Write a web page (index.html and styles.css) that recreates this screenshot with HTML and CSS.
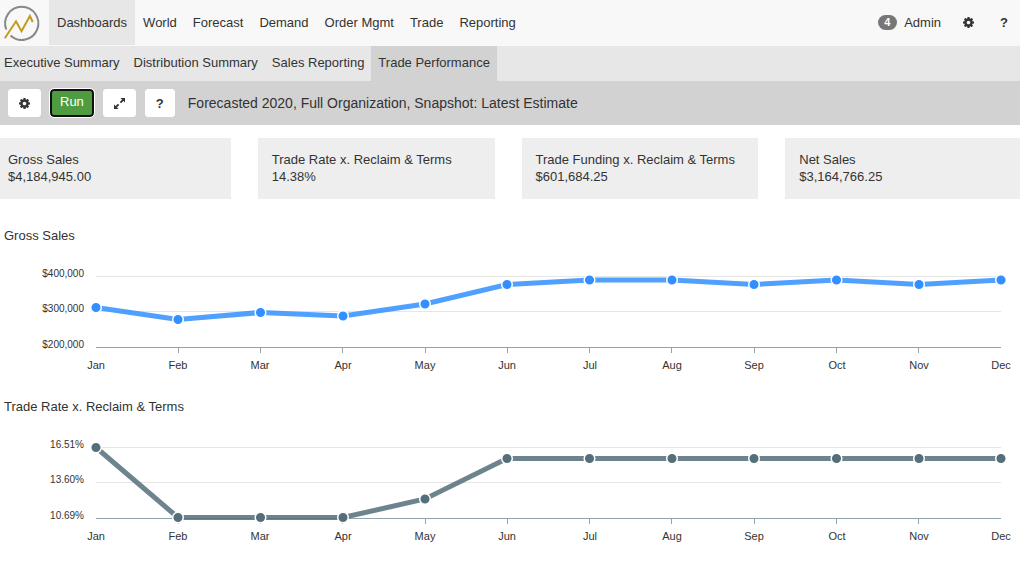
FILE: index.html
```html
<!DOCTYPE html>
<html lang="en">
<head>
<meta charset="utf-8">
<meta name="viewport" content="width=device-width, initial-scale=1">
<title>Trade Performance</title>
<link rel="stylesheet" href="styles.css">
</head>
<body>
<svg class="defs" aria-hidden="true">
  <symbol id="gear" viewBox="0 0 1536 1536"><path d="M1024 768q0-106-75-181t-181-75-181 75-75 181 75 181 181 75 181-75 75-181zm512-109v222q0 12-8 23t-20 13l-185 28q-19 54-39 91 35 50 107 138 10 12 10 25t-9 23q-27 37-99 108t-94 71q-12 0-26-9l-138-108q-44 23-91 38-16 136-29 186-7 28-36 28H657q-14 0-24.500-8.500T621 1506l-28-184q-49-16-90-37l-141 107q-10 9-25 9-14 0-25-11-126-114-165-168-7-10-7-23 0-12 8-23 15-21 51-66.500t54-70.500q-27-50-41-99L29 913q-13-2-21-12.500T0 877V655q0-12 8-23t19-13l186-28q14-46 39-92-40-57-107-138-10-12-10-24 0-10 9-23 26-36 98.500-107.500T337 135q13 0 26 10l138 107q44-23 91-38 16-136 29-186 7-28 36-28h222q14 0 24.500 8.500T915 30l28 184q49 16 90 37l142-107q9-9 24-9 13 0 25 10 129 119 165 170 7 8 7 22 0 12-8 23-15 21-51 66.500t-54 70.500q26 50 41 98l183 28q13 2 21 12.500t8 23.500z"/></symbol>
</svg>

<header class="topbar">
  <a class="logo" href="#" aria-label="Home">
    <svg viewBox="0 0 42 46" width="42" height="46">
      <path class="logo-ring" d="M6.300 29.500A16.600 16.600 0 1 1 10.500 35.600"/>
      <path class="logo-line" d="M4.800 38.200 16 21.300 21.500 31.200 29.900 16 32.700 22"/>
    </svg>
  </a>
  <nav class="menu" aria-label="Main">
    <a class="active" href="#">Dashboards</a>
    <a href="#">World</a>
    <a href="#">Forecast</a>
    <a href="#">Demand</a>
    <a href="#">Order Mgmt</a>
    <a href="#">Trade</a>
    <a href="#">Reporting</a>
  </nav>
  <div class="account">
    <a class="user" href="#"><span class="badge">4</span>Admin</a>
    <a href="#" aria-label="Settings"><svg class="icon"><use href="#gear"/></svg></a>
    <a class="help" href="#">?</a>
  </div>
</header>

<nav class="subnav" aria-label="Dashboards">
  <a href="#">Executive Summary</a>
  <a href="#">Distribution Summary</a>
  <a href="#">Sales Reporting</a>
  <a class="active" href="#">Trade Performance</a>
</nav>

<div class="toolbar">
  <button class="btn" type="button" aria-label="Options"><svg class="icon"><use href="#gear"/></svg></button>
  <button class="btn run" type="button">Run</button>
  <button class="btn" type="button" aria-label="Expand">
    <svg class="icon expand" viewBox="0 0 12 12"><path class="solid" d="M7 0h5v5zM0 7v5h5z"/><path class="shaft" d="M10 2 7 5M5 7 2 10"/></svg>
  </button>
  <button class="btn question" type="button">?</button>
  <h1 class="report">Forecasted 2020, Full Organization, Snapshot: Latest Estimate</h1>
</div>

<main>
  <section class="cards">
    <div class="card"><div>Gross Sales</div><div>$4,184,945.00</div></div>
    <div class="card"><div>Trade Rate x. Reclaim &amp; Terms</div><div>14.38%</div></div>
    <div class="card"><div>Trade Funding x. Reclaim &amp; Terms</div><div>$601,684.25</div></div>
    <div class="card"><div>Net Sales</div><div>$3,164,766.25</div></div>
  </section>

  <section class="panel">
    <h2>Gross Sales</h2>
    <svg class="chart sales" viewBox="0 0 1020 120" role="img" aria-label="Gross sales by month">
      <defs><marker id="dot-sales" markerUnits="userSpaceOnUse" markerWidth="14" markerHeight="14" refX="7" refY="7"><circle cx="7" cy="7" r="5.300"/></marker></defs>
      <path class="grid" d="M96 18.500H1001M96 53.500H1001"/>
      <path class="axis" d="M96 89.500H1001M178.500 89V95M260.500 89V95M342.500 89V95M425.500 89V95M507.500 89V95M589.500 89V95M671.500 89V95M754.500 89V95M836.500 89V95M918.500 89V95"/>
      <polyline class="line" points="96,49.500 178,61.500 260.500,54.500 343,58 425,46 507,26.500 589.500,22 672,22 754,26.500 836.500,22 919,26.500 1001,22"/>
      <polyline class="dots" points="96,49.500 178,61.500 260.500,54.500 343,58 425,46 507,26.500 589.500,22 672,22 754,26.500 836.500,22 919,26.500 1001,22"/>
      <g class="values"><text x="84" y="19">$400,000</text><text x="84" y="54">$300,000</text><text x="84" y="90">$200,000</text></g>
      <g class="months"><text x="96" y="111">Jan</text><text x="178" y="111">Feb</text><text x="260" y="111">Mar</text><text x="343" y="111">Apr</text><text x="425" y="111">May</text><text x="507" y="111">Jun</text><text x="590" y="111">Jul</text><text x="672" y="111">Aug</text><text x="754" y="111">Sep</text><text x="837" y="111">Oct</text><text x="919" y="111">Nov</text><text x="1001" y="111">Dec</text></g>
    </svg>
  </section>

  <section class="panel">
    <h2>Trade Rate x. Reclaim &amp; Terms</h2>
    <svg class="chart rate" viewBox="0 0 1020 120" role="img" aria-label="Trade rate by month">
      <defs><marker id="dot-rate" markerUnits="userSpaceOnUse" markerWidth="14" markerHeight="14" refX="7" refY="7"><circle cx="7" cy="7" r="5.300"/></marker></defs>
      <path class="grid" d="M96 18.500H1001M96 53.500H1001"/>
      <path class="axis" d="M96 89.500H1001M178.500 89V95M260.500 89V95M342.500 89V95M425.500 89V95M507.500 89V95M589.500 89V95M671.500 89V95M754.500 89V95M836.500 89V95M918.500 89V95"/>
      <polyline class="line" points="96,18.500 178,88.500 260.500,88.500 343,88.500 425,70 507,29.500 589.500,29.500 672,29.500 754,29.500 836.500,29.500 919,29.500 1001,29.500"/>
      <polyline class="dots" points="96,18.500 178,88.500 260.500,88.500 343,88.500 425,70 507,29.500 589.500,29.500 672,29.500 754,29.500 836.500,29.500 919,29.500 1001,29.500"/>
      <g class="values"><text x="84" y="19">16.51%</text><text x="84" y="54">13.60%</text><text x="84" y="90">10.69%</text></g>
      <g class="months"><text x="96" y="111">Jan</text><text x="178" y="111">Feb</text><text x="260" y="111">Mar</text><text x="343" y="111">Apr</text><text x="425" y="111">May</text><text x="507" y="111">Jun</text><text x="590" y="111">Jul</text><text x="672" y="111">Aug</text><text x="754" y="111">Sep</text><text x="837" y="111">Oct</text><text x="919" y="111">Nov</text><text x="1001" y="111">Dec</text></g>
    </svg>
  </section>
</main>
</body>
</html>
```

FILE: styles.css
```css
* { box-sizing: border-box; }

body {
  margin: 0;
  overflow-x: hidden;
  background: #fff;
  color: #333;
  font: 13px/17px "Liberation Sans", Arial, sans-serif;
}

a { color: inherit; text-decoration: none; }

.defs { display: none; }

.icon { display: block; width: 11px; height: 11px; fill: #333; }

.topbar {
  display: flex;
  height: 46px;
  background: #f8f8f8;
}

.logo { width: 49px; }
.logo svg { display: block; fill: none; }
.logo-ring { stroke: #888; stroke-width: 2; }
.logo-line { stroke: #c39a1c; stroke-width: 2; }

.menu { display: flex; height: 45px; }
.menu a { padding: 14px 8px; }
.menu .active { background: #e7e7e7; }

.account {
  display: flex;
  align-items: center;
  gap: 22px;
  height: 45px;
  margin-left: auto;
  padding-right: 12px;
}
.user { display: flex; align-items: center; gap: 7px; }
.badge {
  min-width: 19px;
  padding: 2px 6px;
  border-radius: 8px;
  background: #777;
  color: #fff;
  font-size: 11px;
  font-weight: bold;
  line-height: 11px;
}
.help { padding-left: 4px; font-size: 13px; font-weight: bold; }

.subnav {
  display: flex;
  height: 35px;
  padding-left: 4px;
  margin-left: -7px;
  background: #e7e7e7;
}
.subnav a { padding: 8px 7px 10px; }
.subnav .active { background: #d2d2d2; }

.toolbar {
  display: flex;
  align-items: center;
  gap: 9px;
  height: 44px;
  padding: 0 8px;
  background: #d2d2d2;
}
.btn {
  height: 28px;
  margin: 0;
  padding: 0 10px;
  border: 1px solid #fff;
  border-radius: 3px;
  background: #fff;
  color: #333;
  font: 13px/17px "Liberation Sans", Arial, sans-serif;
}
.run {
  padding: 0 8px 3px;
  border: 2px solid #101010;
  border-radius: 4px;
  outline: 1px solid #fff;
  background: #4f9c40;
  color: #fff;
}
.question { font-weight: bold; }
.expand .shaft { stroke: #333; stroke-width: 2; }
.report { margin: 0 0 0 4px; font-size: 14px; font-weight: normal; }

.cards {
  display: grid;
  grid-template-columns: repeat(4, 1fr);
  gap: 27px;
  margin: 13px -2px 28px -6px;
}
.card { padding: 13px 14px 14px; background: #eee; min-height: 61px; }

.panel { margin-bottom: 20px; }
.panel h2 { margin: 0 4px 14px; font-size: 13px; font-weight: normal; }

.chart { display: block; width: 100%; }
.chart .grid { stroke: #e6e6e6; }
.chart .axis { stroke: #90a4ae; fill: none; }
.line { fill: none; stroke-width: 5; stroke-opacity: .85; }
.dots { fill: none; stroke: none; }
.chart circle { stroke: #fff; stroke-width: 1.500; }
.sales .line { stroke: #318fff; }
.sales circle { fill: #318fff; }
.sales .dots { marker: url(#dot-sales); }
.rate .line { stroke: #546e7a; }
.rate circle { fill: #546e7a; }
.rate .dots { marker: url(#dot-rate); }
.values { font-size: 10px; text-anchor: end; fill: #333; }
.months { font-size: 11px; text-anchor: middle; fill: #333; }
```
